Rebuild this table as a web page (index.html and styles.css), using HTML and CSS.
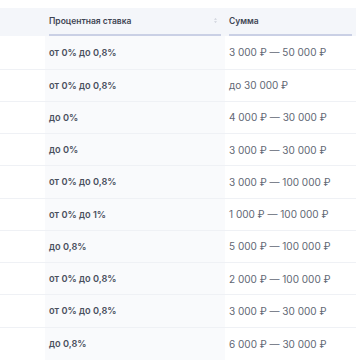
FILE: index.html
```html
<!DOCTYPE html>
<html lang="ru">
<head>
<meta charset="utf-8">
<link rel="stylesheet" href="styles.css">
</head>
<body>
<div class="table">
  <div class="head">
    <div class="c0"></div>
    <div class="c1"><div class="th">Процентная ставка<svg class="sort" width="5" height="7" viewBox="0 0 5 7"><path d="M2.5 1 L4 2.8 H1 Z M2.5 6 L4 4.2 H1 Z" fill="#cdd1da"/></svg></div></div>
    <div class="c2"><div class="th">Сумма</div></div>
  </div>
  <div class="row first"><div class="c0"></div><div class="c1">от 0% до 0,8%</div><div class="c2">3 000 ₽ — 50 000 ₽</div></div>
  <div class="row"><div class="c0"></div><div class="c1">от 0% до 0,8%</div><div class="c2">до 30 000 ₽</div></div>
  <div class="row"><div class="c0"></div><div class="c1">до 0%</div><div class="c2">4 000 ₽ — 30 000 ₽</div></div>
  <div class="row"><div class="c0"></div><div class="c1">до 0%</div><div class="c2">3 000 ₽ — 30 000 ₽</div></div>
  <div class="row"><div class="c0"></div><div class="c1">от 0% до 0,8%</div><div class="c2">3 000 ₽ — 100 000 ₽</div></div>
  <div class="row"><div class="c0"></div><div class="c1">от 0% до 1%</div><div class="c2">1 000 ₽ — 100 000 ₽</div></div>
  <div class="row"><div class="c0"></div><div class="c1">до 0,8%</div><div class="c2">5 000 ₽ — 100 000 ₽</div></div>
  <div class="row"><div class="c0"></div><div class="c1">от 0% до 0,8%</div><div class="c2">2 000 ₽ — 100 000 ₽</div></div>
  <div class="row"><div class="c0"></div><div class="c1">от 0% до 0,8%</div><div class="c2">3 000 ₽ — 30 000 ₽</div></div>
  <div class="row last"><div class="c0"></div><div class="c1">до 0,8%</div><div class="c2">6 000 ₽ — 30 000 ₽</div></div>
</div>
</body>
</html>
```
FILE: styles.css
```css
html, body {
  margin: 0;
  padding: 0;
  background: #ffffff;
}
body {
  padding-top: 8px;
  overflow: hidden;
  font-family: Inter, "Noto Sans", sans-serif;
  font-size: 10px;
}
.table {
  width: 356px;
}
.head {
  display: flex;
  height: 28px;
  background: #f4f6fa;
}
.head .c1, .head .c2 {
  padding: 0 4px;
}
.th {
  height: 28px;
  box-sizing: border-box;
  border-bottom: 2px solid #cad0e5;
  display: flex;
  align-items: center;
  padding-bottom: 1px;
  font-weight: 600;
  color: #3f4554;
  font-size: 8.5px;
}
.sort {
  margin-left: auto;
  margin-right: 3px;
}
.c0 {
  width: 45px;
  flex: none;
}
.c1 {
  width: 180px;
  flex: none;
  box-sizing: border-box;
}
.c2 {
  flex: 1;
  box-sizing: border-box;
}
.row {
  display: flex;
  height: 32.25px;
  box-sizing: border-box;
  border-bottom: 1px solid #eff1f5;
}
.row.first {
  height: 33.5px;
}
.row.last {
  border-bottom: none;
}
.row .c1 {
  background: #f9fafc;
  padding: 0 4px;
  display: flex;
  align-items: center;
  font-weight: 600;
  font-size: 9.2px;
  color: #4a505e;
}
.row .c2 {
  padding: 0 4px;
  display: flex;
  align-items: center;
  color: #616774;
}
```
